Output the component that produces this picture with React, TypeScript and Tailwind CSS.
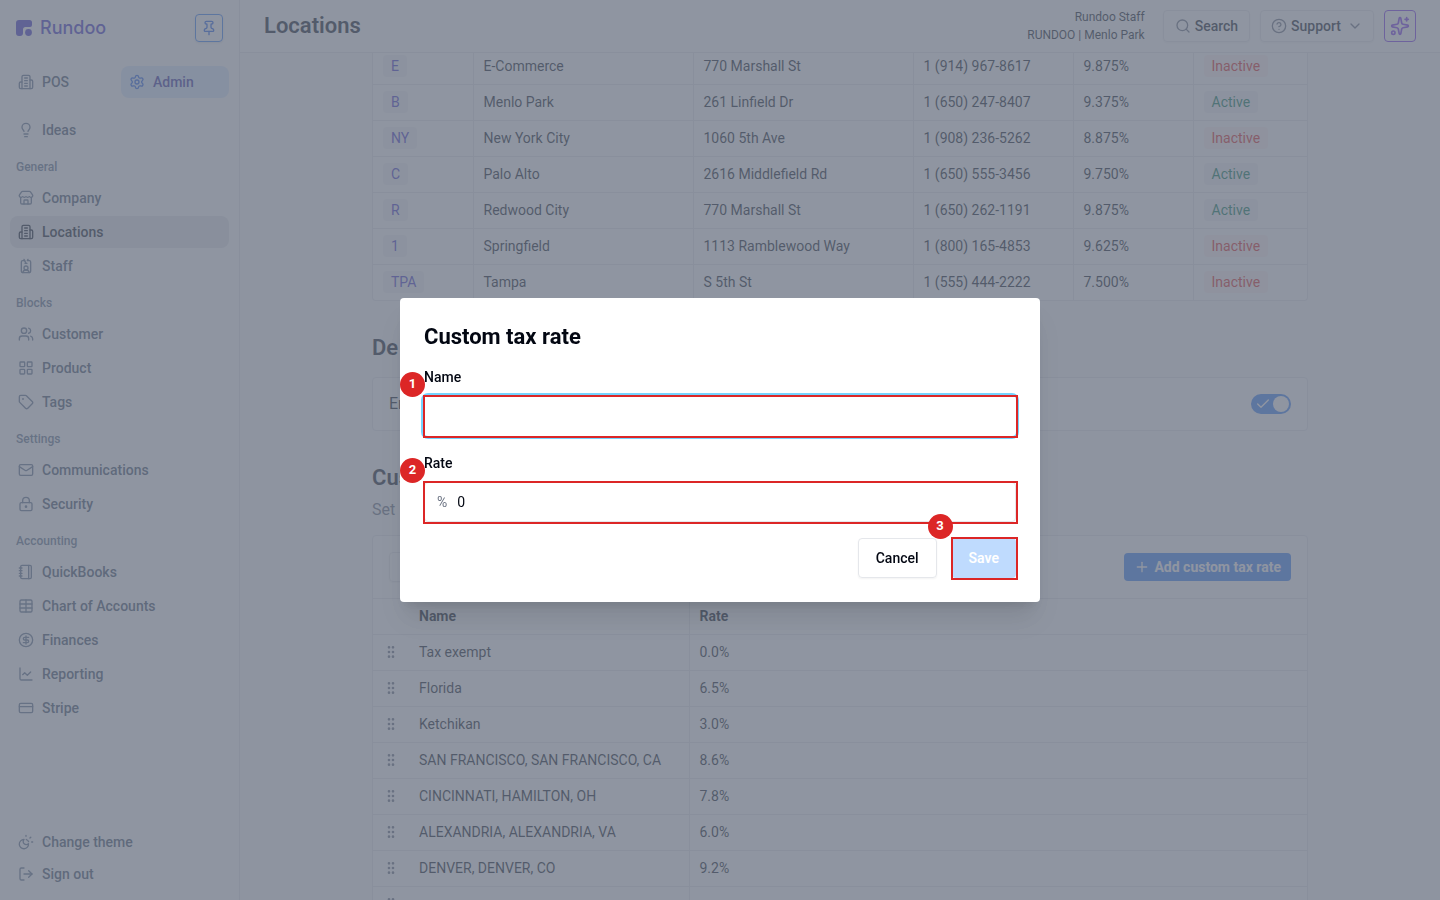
import type { ComponentType, ReactNode } from "react";
import {
  ChartLine,
  Check,
  ChevronDown,
  CircleDollarSign,
  CircleQuestionMark,
  CreditCard,
  GripVertical,
  IdCardLanyard,
  LayoutGrid,
  Lightbulb,
  LockKeyhole,
  LogOut,
  Mail,
  Notebook,
  Pin,
  Plus,
  Search,
  Settings,
  Sparkles,
  Store,
  Table,
  Tag,
  Users,
} from "lucide-react";

type IconType = ComponentType<{ className?: string; strokeWidth?: number }>;

interface NavItem {
  label: string;
  icon: IconType;
}

interface Location {
  code: string;
  name: string;
  address: string;
  phone: string;
  rate: string;
  active: boolean;
}

function BuildingIcon({ className, strokeWidth = 2 }: { className?: string; strokeWidth?: number }) {
  return (
    <svg viewBox="0 0 24 24" fill="none" stroke="currentColor" strokeWidth={strokeWidth} strokeLinecap="round" strokeLinejoin="round" className={className}>
      <path d="M6 22V4a2 2 0 0 1 2-2h8a2 2 0 0 1 2 2v18Z" />
      <path d="M6 12H4a2 2 0 0 0-2 2v6a2 2 0 0 0 2 2h2" />
      <path d="M18 9h2a2 2 0 0 1 2 2v9a2 2 0 0 1-2 2h-2" />
      <path d="M10 6h4M10 10h4M10 14h4M10 18h4" />
    </svg>
  );
}

function ThemeIcon({ className, strokeWidth = 2 }: { className?: string; strokeWidth?: number }) {
  return (
    <svg viewBox="0 0 24 24" fill="none" stroke="currentColor" strokeWidth={strokeWidth} strokeLinecap="round" strokeLinejoin="round" className={className}>
      <path d="M9 8.3a4.2 4.2 0 0 0 6.7 6.2A6.9 6.9 0 1 1 9 8.3Z" />
      <path d="M12.5 8.3a5 5 0 0 1 3.4 3.2" />
      <path d="M12 2v1.5M19.2 4.8l-1.3 1.3M22 12h-1.5" />
    </svg>
  );
}

function Logo() {
  return (
    <div className="flex items-center gap-2 text-[#4338ca]">
      <svg viewBox="0 0 16 16" className="size-4" fill="currentColor">
        <path d="M3 0h10.500a2.500 2.500 0 0 1 2.500 2.500v2.500a2 2 0 0 1-2 2H9.500A2.500 2.500 0 0 0 7 9.500V13a3 3 0 0 1-3 3H3a3 3 0 0 1-3-3V3a3 3 0 0 1 3-3Z" />
        <circle cx="12.500" cy="12.500" r="3.400" />
      </svg>
      <span className="font-['Inter',sans-serif] text-lg leading-6 font-medium">Rundoo</span>
    </div>
  );
}

const SECTIONS: { title: string; items: NavItem[] }[] = [
  {
    title: "General",
    items: [
      { label: "Company", icon: Store },
      { label: "Locations", icon: BuildingIcon },
      { label: "Staff", icon: IdCardLanyard },
    ],
  },
  {
    title: "Blocks",
    items: [
      { label: "Customer", icon: Users },
      { label: "Product", icon: LayoutGrid },
      { label: "Tags", icon: Tag },
    ],
  },
  {
    title: "Settings",
    items: [
      { label: "Communications", icon: Mail },
      { label: "Security", icon: LockKeyhole },
    ],
  },
  {
    title: "Accounting",
    items: [
      { label: "QuickBooks", icon: Notebook },
      { label: "Chart of Accounts", icon: Table },
      { label: "Finances", icon: CircleDollarSign },
      { label: "Reporting", icon: ChartLine },
      { label: "Stripe", icon: CreditCard },
    ],
  },
];

const LOCATIONS: Location[] = [
  { code: "E", name: "E-Commerce", address: "770 Marshall St", phone: "1 (914) 967-8617", rate: "9.875%", active: false },
  { code: "B", name: "Menlo Park", address: "261 Linfield Dr", phone: "1 (650) 247-8407", rate: "9.375%", active: true },
  { code: "NY", name: "New York City", address: "1060 5th Ave", phone: "1 (908) 236-5262", rate: "8.875%", active: false },
  { code: "C", name: "Palo Alto", address: "2616 Middlefield Rd", phone: "1 (650) 555-3456", rate: "9.750%", active: true },
  { code: "R", name: "Redwood City", address: "770 Marshall St", phone: "1 (650) 262-1191", rate: "9.875%", active: true },
  { code: "1", name: "Springfield", address: "1113 Ramblewood Way", phone: "1 (800) 165-4853", rate: "9.625%", active: false },
  { code: "TPA", name: "Tampa", address: "S 5th St", phone: "1 (555) 444-2222", rate: "7.500%", active: false },
];

const TAX_RATES = [
  { name: "Tax exempt", rate: "0.0%" },
  { name: "Florida", rate: "6.5%" },
  { name: "Ketchikan", rate: "3.0%" },
  { name: "SAN FRANCISCO, SAN FRANCISCO, CA", rate: "8.6%" },
  { name: "CINCINNATI, HAMILTON, OH", rate: "7.8%" },
  { name: "ALEXANDRIA, ALEXANDRIA, VA", rate: "6.0%" },
  { name: "DENVER, DENVER, CO", rate: "9.2%" },
  { name: "", rate: "" },
];

function NavLink({ item, active = false }: { item: NavItem; active?: boolean }) {
  const Icon = item.icon;
  return (
    <a
      href="#"
      className={`flex h-8 items-center gap-2 rounded-lg px-2 text-sm font-medium ${active ? "bg-gray-200 text-gray-900" : "text-slate-600"}`}
    >
      <Icon className={`size-4 ${active ? "text-gray-900" : "text-slate-500"}`} strokeWidth={2} />
      {item.label}
    </a>
  );
}

function Sidebar() {
  return (
    <aside className="flex w-60 shrink-0 flex-col border-r border-gray-200 bg-white px-2.5 pb-2.5">
      <div className="flex h-14 items-center justify-between px-1.5">
        <Logo />
        <button aria-label="Pin sidebar" className="flex size-7 items-center justify-center rounded border border-[#3b82f6] text-[#2563eb] shadow-sm">
          <Pin className="size-4" strokeWidth={2} />
        </button>
      </div>
      <div className="mt-2.5 grid grid-cols-2 gap-[3px]">
        <NavLink item={{ label: "POS", icon: BuildingIcon }} />
        <a href="#" className="flex h-8 items-center gap-2 rounded-lg bg-[#dbeafe] px-2 text-sm font-medium text-[#3730a3]">
          <Settings className="size-4 text-[#2563eb]" strokeWidth={2} />
          Admin
        </a>
      </div>
      <nav className="mt-4 flex flex-col">
        <NavLink item={{ label: "Ideas", icon: Lightbulb }} />
        {SECTIONS.map((section) => (
          <div key={section.title}>
            <h3 className="flex h-9 items-center px-1.5 pt-1.5 text-xs font-medium text-slate-500">{section.title}</h3>
            <div className="flex flex-col gap-0.5">
              {section.items.map((item) => (
                <NavLink key={item.label} item={item} active={item.label === "Locations"} />
              ))}
            </div>
          </div>
        ))}
      </nav>
      <div className="mt-auto flex flex-col">
        <NavLink item={{ label: "Change theme", icon: ThemeIcon }} />
        <NavLink item={{ label: "Sign out", icon: LogOut }} />
      </div>
    </aside>
  );
}

function Header() {
  return (
    <header className="relative z-10 flex h-[53px] shrink-0 items-center border-b border-gray-200 bg-white px-6">
      <h1 className="flex-1 text-[22px] leading-7 font-semibold text-gray-900">Locations</h1>
      <div className="mr-[18px] text-right text-xs leading-[18px] text-gray-900">
        <p>Rundoo Staff</p>
        <p>RUNDOO | Menlo Park</p>
      </div>
      <div className="flex gap-2.5 text-sm font-medium text-gray-900">
        <button className="flex h-8 items-center gap-1 rounded border border-gray-200 px-[11px] shadow-xs">
          <Search className="size-4 text-gray-500" strokeWidth={2} />
          Search
        </button>
        <button className="flex h-8 items-center gap-1 rounded border border-gray-200 px-2.5 shadow-xs">
          <CircleQuestionMark className="size-4 text-gray-500" strokeWidth={2} />
          Support
          <ChevronDown className="ml-0.5 size-4 text-gray-500" strokeWidth={2} />
        </button>
        <button aria-label="Assistant" className="flex size-8 items-center justify-center rounded border border-[#7c3aed] text-[#7c3aed]">
          <Sparkles className="size-5" strokeWidth={2} />
        </button>
      </div>
    </header>
  );
}

function Pill({ tone, children }: { tone: "code" | "red" | "green"; children: ReactNode }) {
  const tones = {
    code: "bg-gray-100 text-[#4338ca]",
    red: "bg-red-50 text-[#dc2626]",
    green: "bg-gray-100 text-[#047857]",
  };
  return <span className={`inline-flex h-[22px] items-center rounded px-2 ${tones[tone]}`}>{children}</span>;
}

function LocationsTable() {
  return (
    <div className="overflow-hidden rounded-b border border-t-0 border-gray-200 bg-white">
      <table className="w-full table-fixed text-sm text-gray-900">
        <colgroup>
          <col className="w-[100px]" />
          <col className="w-[220px]" />
          <col className="w-[220px]" />
          <col className="w-[160px]" />
          <col className="w-[120px]" />
          <col />
        </colgroup>
        <tbody className="divide-y divide-gray-200">
          {LOCATIONS.map((loc) => (
            <tr key={loc.code} className="h-9 divide-x divide-gray-200">
              <td className="px-2.5"><Pill tone="code">{loc.code}</Pill></td>
              <td className="px-2.5">{loc.name}</td>
              <td className="px-2.5">{loc.address}</td>
              <td className="px-2.5">{loc.phone}</td>
              <td className="px-2.5">{loc.rate}</td>
              <td className="px-2.5">
                <Pill tone={loc.active ? "green" : "red"}>{loc.active ? "Active" : "Inactive"}</Pill>
              </td>
            </tr>
          ))}
        </tbody>
      </table>
    </div>
  );
}

function DefaultTax() {
  return (
    <section className="mt-[33px]">
      <h2 className="text-[22px] leading-7 font-semibold text-gray-900">De</h2>
      <div className="mt-[15px] flex h-[54px] items-center justify-between rounded border border-gray-200 bg-white px-4">
        <label htmlFor="default-tax" className="text-base text-gray-900">En</label>
        <span className="relative flex h-5 w-10 items-center rounded-full bg-[#3b82f6]">
          <input id="default-tax" type="checkbox" defaultChecked className="absolute inset-0 size-full appearance-none" />
          <Check className="ml-1 size-4 text-white" strokeWidth={2} />
          <span className="mr-0.5 ml-auto size-4 rounded-full bg-white" />
        </span>
      </div>
    </section>
  );
}

function CustomTaxes() {
  return (
    <section className="mt-[33px]">
      <h2 className="text-[22px] leading-7 font-semibold text-gray-900">Cus</h2>
      <p className="mt-1.5 text-base text-gray-500">Set</p>
      <div className="mt-[13px] rounded border border-gray-200 bg-white">
        <div className="flex h-[63px] items-center justify-between border-b border-gray-200 px-4">
          <input aria-label="Search tax rates" className="h-[30px] w-60 rounded border border-gray-200 px-2 text-sm shadow-xs" />
          <button className="flex h-7 items-center gap-1 rounded bg-[#3b82f6] px-2.5 text-sm font-bold text-white">
            <Plus className="size-4" strokeWidth={2} />
            Add custom tax rate
          </button>
        </div>
        <table className="w-full table-fixed text-sm text-gray-900">
          <colgroup>
            <col className="w-9" />
            <col className="w-[280px]" />
            <col />
          </colgroup>
          <thead>
            <tr className="h-[35px] border-b border-gray-200 text-left">
              <td />
              <th className="border-r border-gray-200 px-2.5 font-bold">Name</th>
              <th className="px-2.5 font-bold">Rate</th>
            </tr>
          </thead>
          <tbody className="divide-y divide-gray-200">
            {TAX_RATES.map((tax, i) => (
              <tr key={i} className="h-9">
                <td>
                  <GripVertical className="ml-2.5 size-4 text-gray-500" strokeWidth={2} />
                </td>
                <td className="border-r border-gray-200 px-2.5">{tax.name}</td>
                <td className="px-2.5">{tax.rate}</td>
              </tr>
            ))}
          </tbody>
        </table>
      </div>
    </section>
  );
}

// Numbered step marker with an outline around the control it wraps
function Step({ number, children }: { number: number; children: ReactNode }) {
  return (
    <div className="relative">
      {children}
      <span className="pointer-events-none absolute -top-px -right-0.5 -bottom-0.5 -left-px border-2 border-[#dc2626]" />
      <span className="absolute -top-6 -left-6 flex size-[25px] items-center justify-center rounded-full bg-[#dc2626] pb-0.5 text-[13px] leading-4 font-bold text-white">
        {number}
      </span>
    </div>
  );
}

function TaxRateDialog() {
  return (
    <div className="fixed inset-0 z-20 flex items-center justify-center bg-gray-500/75">
      <form
        role="dialog"
        aria-labelledby="dialog-title"
        onSubmit={(e) => e.preventDefault()}
        className="w-full max-w-[640px] rounded bg-white px-6 pt-[25px] pb-6 text-sm text-gray-950 shadow-xl"
      >
        <h2 id="dialog-title" className="mb-4 text-[22px] leading-7 font-bold">Custom tax rate</h2>
        <label htmlFor="tax-name" className="mb-[9px] block leading-5 font-medium">Name</label>
        <Step number={1}>
          <input id="tax-name" className="block h-10 w-full rounded px-3 ring-3 ring-sky-300 outline-none" />
        </Step>
        <label htmlFor="tax-rate" className="mt-[17px] mb-[9px] block leading-5 font-medium">Rate</label>
        <Step number={2}>
          <div className="flex h-10 items-center gap-2.5 rounded border border-gray-200 px-3">
            <span className="text-gray-500">%</span>
            <input id="tax-rate" defaultValue="0" className="min-w-0 flex-1 outline-none" />
          </div>
        </Step>
        <div className="mt-4 flex justify-end gap-[15px]">
          <button type="button" className="h-10 rounded border border-gray-200 px-[17px] font-medium shadow-xs">Cancel</button>
          <Step number={3}>
            <button type="submit" disabled className="block h-10 rounded bg-[#bfdbfe] px-[17px] font-semibold text-white">Save</button>
          </Step>
        </div>
      </form>
    </div>
  );
}

export default function App() {
  return (
    <div className="flex h-screen overflow-hidden bg-gray-50 font-['Roboto',sans-serif]">
      <Sidebar />
      <div className="flex min-w-0 flex-1 flex-col">
        <Header />
        <main className="min-h-0 flex-1 overflow-hidden px-6">
          <div className="mx-auto -mt-[5px] max-w-[936px]">
            <LocationsTable />
            <DefaultTax />
            <CustomTaxes />
          </div>
        </main>
      </div>
      <TaxRateDialog />
    </div>
  );
}
